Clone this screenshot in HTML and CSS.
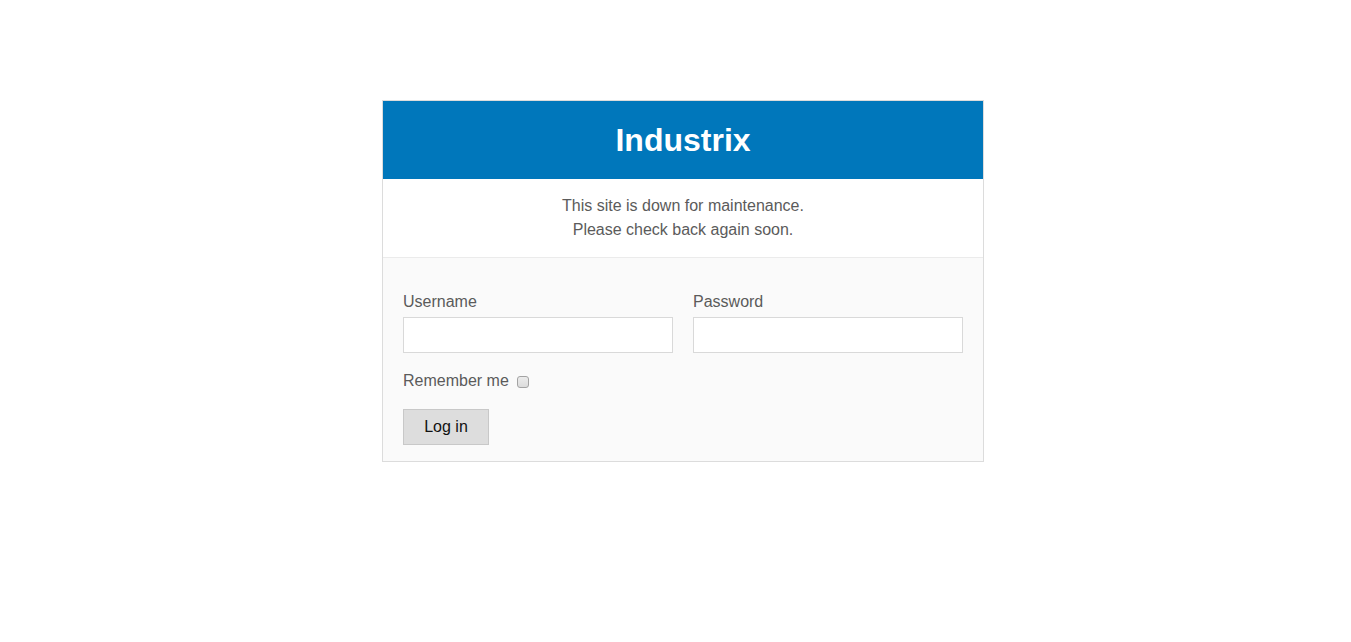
FILE: index.html
```html
<!DOCTYPE html>
<html>
<head>
<meta charset="utf-8">
<link rel="stylesheet" href="styles.css">
</head>
<body>
<div class="page">
  <div class="card">
    <div class="header"><h1>Industrix</h1></div>
    <div class="message">
      <p>This site is down for maintenance.</p>
      <p>Please check back again soon.</p>
    </div>
    <form class="form">
      <div class="fields">
        <div class="field">
          <label>Username</label>
          <input type="text" class="input">
        </div>
        <div class="field">
          <label>Password</label>
          <input type="password" class="input">
        </div>
      </div>
      <div class="remember">
        <span>Remember me</span>
        <span class="check"></span>
      </div>
      <button type="button" class="btn">Log in</button>
    </form>
  </div>
</div>
</body>
</html>
```
FILE: styles.css
```css
html, body {
  margin: 0;
  padding: 0;
  background: #fff;
  font-family: "Liberation Sans", Arial, sans-serif;
  color: #5b5b5b;
}
.page {
  display: flex;
  justify-content: center;
  padding-top: 100px;
}
.card {
  width: 600px;
  border: 1px solid #dcdcdc;
  margin-left: 15px;
}
.header {
  background: #0077bb;
  height: 78px;
  display: flex;
  align-items: center;
  justify-content: center;
}
.header h1 {
  margin: 0;
  color: #fff;
  font-size: 32px;
  font-weight: bold;
  line-height: 1;
}
.message {
  background: #fff;
  padding: 15px 0;
  text-align: center;
  font-size: 16px;
  line-height: 24px;
  border-bottom: 1px solid #ebebeb;
}
.message p { margin: 0; }
.form {
  background: #fafafa;
  padding: 33px 20px 16px;
  margin: 0;
}
.fields {
  display: grid;
  grid-template-columns: 1fr 1fr;
  column-gap: 20px;
}
.field label {
  display: block;
  font-size: 16px;
  line-height: 22px;
  margin-bottom: 4px;
}
.input {
  display: block;
  box-sizing: border-box;
  width: 100%;
  height: 36px;
  border: 1px solid #d9d9d9;
  background: #fff;
  margin: 0;
  padding: 0 8px;
  outline: none;
}
.remember {
  display: flex;
  align-items: center;
  gap: 8px;
  font-size: 16px;
  line-height: 22px;
  margin-top: 17px;
}
.check {
  width: 12px;
  height: 12px;
  box-sizing: border-box;
  border: 1px solid #a3a3a3;
  border-radius: 3px;
  background: linear-gradient(#ececec, #dcdcdc);
  margin-top: 1px;
}
.btn {
  display: block;
  margin-top: 17px;
  width: 86px;
  height: 36px;
  background: #dddddd;
  border: 1px solid #c8c8c8;
  border-radius: 0;
  font-family: "Liberation Sans", Arial, sans-serif;
  font-size: 16px;
  color: #111;
  padding: 0;
}
```
